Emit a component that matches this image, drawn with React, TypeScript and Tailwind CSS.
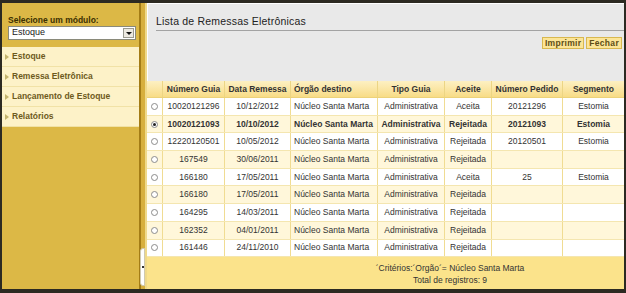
import { useState } from 'react';

const rows = [
  ['10020121296', '10/12/2012', 'Núcleo Santa Marta', 'Administrativa', 'Aceita', '20121296', 'Estomia'],
  ['10020121093', '10/10/2012', 'Núcleo Santa Marta', 'Administrativa', 'Rejeitada', '20121093', 'Estomia'],
  ['12220120501', '10/05/2012', 'Núcleo Santa Marta', 'Administrativa', 'Rejeitada', '20120501', 'Estomia'],
  ['167549', '30/06/2011', 'Núcleo Santa Marta', 'Administrativa', 'Rejeitada', '', ''],
  ['166180', '17/05/2011', 'Núcleo Santa Marta', 'Administrativa', 'Aceita', '25', 'Estomia'],
  ['166180', '17/05/2011', 'Núcleo Santa Marta', 'Administrativa', 'Rejeitada', '', ''],
  ['164295', '14/03/2011', 'Núcleo Santa Marta', 'Administrativa', 'Rejeitada', '', ''],
  ['162352', '04/01/2011', 'Núcleo Santa Marta', 'Administrativa', 'Rejeitada', '', ''],
  ['161446', '24/11/2010', 'Núcleo Santa Marta', 'Administrativa', 'Rejeitada', '', ''],
];

const menu = ['Estoque', 'Remessa Eletrônica', 'Lançamento de Estoque', 'Relatórios'];

const cols = 'grid grid-cols-[16px_62px_66px_87px_67px_47px_71px_61px]';

const Radio = ({ checked }: { checked: boolean }) => (
  <span className="w-[7px] h-[7px] rounded-full border border-[#8c8c8c] bg-white flex items-center justify-center">
    {checked && <span className="w-[3px] h-[3px] rounded-full bg-[#222]" />}
  </span>
);

const App = () => {
  const [selected, setSelected] = useState(1);

  return (
    <div className="w-[626px] h-[293px] bg-[#2c2a22] pt-[3px] pl-[2px] pr-[2px] pb-[4px] flex font-['Liberation_Sans',Arial,sans-serif]">
      {/* barra lateral */}
      <aside className="w-[137px] bg-[#dcb846] flex flex-col">
        <div className="pt-[12px] pl-[6px] pr-[3px]">
          <div className="text-[8.5px] leading-[10px] font-bold text-[#3b2f00]">Selecione um módulo:</div>
          <div className="mt-[1px] h-[14px] bg-white border border-[#8a8a7a] flex items-center justify-between pl-[3px] pr-[1px]">
            <span className="text-[9px] text-[#222]">Estoque</span>
            <span className="w-[11px] h-[10px] bg-[#ece9e0] border border-[#9a9a90] flex items-center justify-center">
              <span className="w-0 h-0 border-l-[3px] border-r-[3px] border-t-[3px] border-l-transparent border-r-transparent border-t-[#111]" />
            </span>
          </div>
        </div>
        <nav className="mt-[7px] bg-[#fdf2c8]">
          {menu.map((m) => (
            <div key={m} className="h-[20px] flex items-center border-b border-[#f1e2a6] pl-[3px] gap-[3px]">
              <span className="w-0 h-0 border-t-[3px] border-b-[3px] border-l-[4px] border-t-transparent border-b-transparent border-l-[#c4b46e]" />
              <span className="text-[8.5px] font-bold text-[#6d5a1c]">{m}</span>
            </div>
          ))}
        </nav>
      </aside>

      {/* divisória */}
      <div className="w-[8px] flex relative">
        <div className="w-[2px] bg-[#a37c16]" />
        <div className="w-[4px] bg-[#d7af3e]" />
        <div className="w-[2px] bg-[#efd98a]" />
        <div className="absolute left-[1px] top-[245px] w-[5px] h-[38px] bg-white rounded-l-[3px] border border-[#cfc9b0] flex items-center justify-center">
          <span className="w-[2px] h-[2px] bg-[#333]" />
        </div>
      </div>

      {/* conteúdo */}
      <main className="flex-1 flex flex-col bg-white">
        <div className="h-[78px] bg-[#e9e9e9] border-t border-l border-white">
          <div className="pl-[8px] pt-[11px]">
            <div className="text-[10.5px] leading-[13px] text-[#222] tracking-[0.2px]">Lista de Remessas Eletrônicas</div>
            <div className="mt-[2px] h-px bg-[#a3a3a3]" />
          </div>
          <div className="mt-[6px] flex justify-end gap-[2px] pr-[2px]">
            <button className="h-[12px] px-[2px] bg-[#fce597] border border-[#d8b850] text-[8.5px] leading-[10px] font-bold text-[#5e4d16] tracking-[0.3px]">Imprimir</button>
            <button className="h-[12px] px-[2px] bg-[#fce597] border border-[#d8b850] text-[8.5px] leading-[10px] font-bold text-[#5e4d16] tracking-[0.3px]">Fechar</button>
          </div>
        </div>

        <div className={`${cols} h-[17px] bg-gradient-to-b from-[#fdf0c2] to-[#f8dc86] text-[8.5px] font-bold text-[#333] border-b border-[#ecd27a]`}>
          <div className="border-r border-[#ecd584]" />
          <div className="border-r border-[#ecd584] flex items-center justify-center">Número Guia</div>
          <div className="border-r border-[#ecd584] flex items-center justify-center">Data Remessa</div>
          <div className="border-r border-[#ecd584] flex items-center pl-[3px]">Órgão destino</div>
          <div className="border-r border-[#ecd584] flex items-center justify-center">Tipo Guia</div>
          <div className="border-r border-[#ecd584] flex items-center justify-center">Aceite</div>
          <div className="border-r border-[#ecd584] flex items-center justify-center">Número Pedido</div>
          <div className="flex items-center justify-center">Segmento</div>
        </div>

        {rows.map((r, i) => (
          <div
            key={i}
            onClick={() => setSelected(i)}
            className={`${cols} h-[17.7px] border-b border-[#f4e6b0] text-[8.5px] text-[#333] ${i % 2 === 1 ? 'bg-[#fff7da]' : 'bg-white'} ${selected === i ? 'font-bold text-[#222]' : ''}`}
          >
            <div className="border-r border-[#f0dc92] flex items-center justify-center">
              <Radio checked={selected === i} />
            </div>
            <div className="border-r border-[#f0dc92] flex items-center justify-center">{r[0]}</div>
            <div className="border-r border-[#f0dc92] flex items-center justify-center">{r[1]}</div>
            <div className="border-r border-[#f0dc92] flex items-center pl-[3px]">{r[2]}</div>
            <div className="border-r border-[#f0dc92] flex items-center justify-center">{r[3]}</div>
            <div className="border-r border-[#f0dc92] flex items-center justify-center">{r[4]}</div>
            <div className="border-r border-[#f0dc92] flex items-center justify-center">{r[5]}</div>
            <div className="flex items-center justify-center">{r[6]}</div>
          </div>
        ))}

        <div className="flex-1 bg-[#fbe38b] pl-[129px] pt-[5px] text-center text-[8.5px] leading-[12px] text-[#333]">
          <div>´Critérios:´Orgão´= Núcleo Santa Marta</div>
          <div>Total de registros: 9</div>
        </div>
      </main>
    </div>
  );
};

export default App;
